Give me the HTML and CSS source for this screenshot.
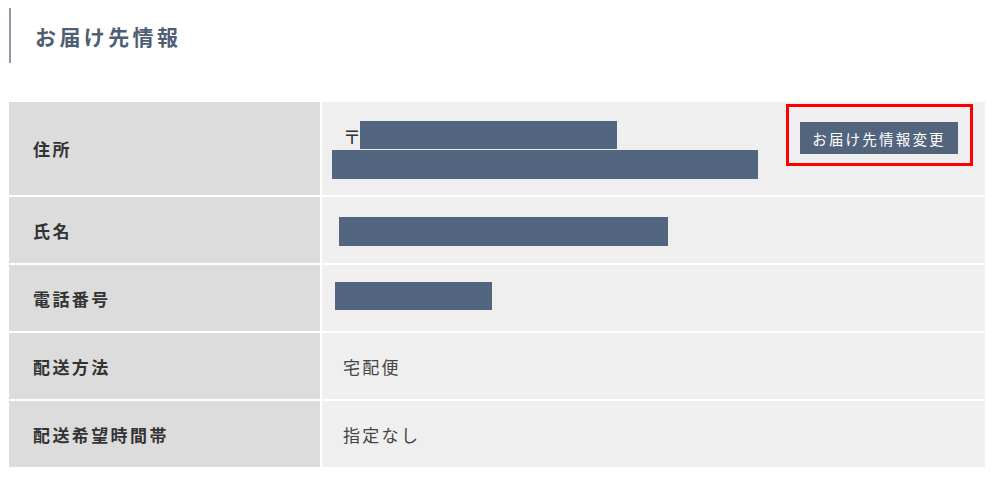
FILE: index.html
```html
<!DOCTYPE html>
<html lang="ja">
<head>
    <meta charset="UTF-8">
    <meta name="viewport" content="width=device-width, initial-scale=1.0">
    <title>お届け先情報</title>
    <link rel="stylesheet" href="styles.css">
</head>
<body>

<div class="page">
    <h2 class="section-title">お届け先情報</h2>

    <div class="info-table">
        <div class="info-row row-address">
            <div class="info-label">住所</div>
            <div class="info-value address-value">
                <div class="address-lines">
                    <div class="zip-line">
                        <span class="zip-mark">〒</span><span class="masked mask-zip"></span>
                    </div>
                    <span class="masked mask-address"></span>
                </div>
                <div class="highlight-box">
                    <button type="button" class="change-button">お届け先情報変更</button>
                </div>
            </div>
        </div>

        <div class="info-row">
            <div class="info-label">氏名</div>
            <div class="info-value">
                <span class="masked mask-name"></span>
            </div>
        </div>

        <div class="info-row">
            <div class="info-label">電話番号</div>
            <div class="info-value">
                <span class="masked mask-tel"></span>
            </div>
        </div>

        <div class="info-row">
            <div class="info-label">配送方法</div>
            <div class="info-value">宅配便</div>
        </div>

        <div class="info-row">
            <div class="info-label">配送希望時間帯</div>
            <div class="info-value">指定なし</div>
        </div>
    </div>
</div>

</body>
</html>
```

FILE: styles.css
```css
body {
    font-family: "Noto Sans CJK JP", "Noto Sans", sans-serif;
    margin: 0;
    background-color: #fff;
    color: #333;
}

.page {
    padding: 8px 15px 0 9px;
}

.section-title {
    margin: 0;
    height: 55px;
    display: flex;
    align-items: center;
    padding-left: 24px;
    border-left: 2px solid #8d99aa;
    font-size: 21px;
    font-weight: bold;
    letter-spacing: 3.4px;
    color: #4f5e73;
}

.info-table {
    margin-top: 39px;
    display: flex;
    flex-direction: column;
    gap: 2px;
}

.info-row {
    display: flex;
    gap: 2px;
    height: 66px;
}

.info-row.row-address {
    height: 93px;
}

.info-label {
    width: 311px;
    flex-shrink: 0;
    background-color: #dcdcdc;
    display: flex;
    align-items: center;
    padding-left: 24px;
    box-sizing: border-box;
    font-size: 17px;
    font-weight: bold;
    letter-spacing: 2.4px;
    color: #333;
}

.info-value {
    flex: 1;
    background-color: #efefef;
    display: flex;
    align-items: center;
    padding-left: 21px;
    font-size: 17px;
    letter-spacing: 2.3px;
    color: #444;
}

.masked {
    display: block;
    background-color: #536680;
}

.address-value {
    align-items: flex-start;
    justify-content: space-between;
    padding-left: 10px;
    padding-right: 12px;
}

.address-lines {
    padding-top: 19px;
}

.zip-line {
    display: flex;
    align-items: center;
    padding-left: 11px;
    height: 28px;
}

.zip-mark {
    font-size: 18px;
    letter-spacing: 0;
    width: 17px;
    margin-top: 2px;
    color: #333;
}

.mask-zip {
    width: 257px;
    height: 28px;
}

.mask-address {
    margin-top: 1px;
    width: 426px;
    height: 29px;
}

.mask-name {
    margin-left: -4px;
    margin-top: 3px;
    width: 329px;
    height: 29px;
}

.mask-tel {
    margin-left: -8px;
    margin-top: -4px;
    width: 157px;
    height: 28px;
}

.highlight-box {
    margin-top: 2px;
    border: 3px solid #ff0000;
    padding: 15px 12px 9px 11px;
}

.change-button {
    display: block;
    width: 158px;
    height: 32px;
    padding: 0;
    border: none;
    background-color: #52657d;
    color: #fff;
    font-family: "Noto Sans CJK JP", "Noto Sans", sans-serif;
    font-size: 14.5px;
    letter-spacing: 2.2px;
    cursor: pointer;
}
```
